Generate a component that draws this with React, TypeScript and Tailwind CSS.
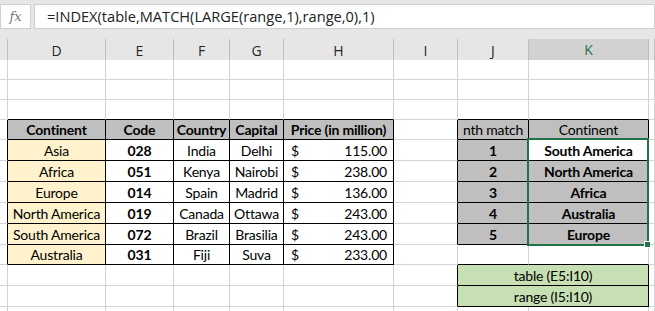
import React from "react";

const COLS = ["", "D", "E", "F", "G", "H", "I", "J", "K", ""];

type Cell = { text?: string; bold?: boolean; bg?: string; price?: string };

const left: Cell[][] = [
  [
    { text: "Continent", bold: true },
    { text: "Code", bold: true },
    { text: "Country", bold: true },
    { text: "Capital", bold: true },
    { text: "Price (in million)", bold: true },
  ],
  ...[
    ["Asia", "028", "India", "Delhi", "115.00"],
    ["Africa", "051", "Kenya", "Nairobi", "238.00"],
    ["Europe", "014", "Spain", "Madrid", "136.00"],
    ["North America", "019", "Canada", "Ottawa", "243.00"],
    ["South America", "072", "Brazil", "Brasilia", "243.00"],
    ["Australia", "031", "Fiji", "Suva", "233.00"],
  ].map((r) => [
    { text: r[0], bg: "yellow" },
    { text: r[1], bold: true },
    { text: r[2] },
    { text: r[3] },
    { price: r[4] },
  ]),
];

const right = ["South America", "North America", "Africa", "Australia", "Europe"];

// which cells belong to a bordered table: [row, col]
function inTable(r: number, c: number) {
  if (r >= 3 && r <= 9 && c >= 1 && c <= 5) return true;
  if (r >= 3 && r <= 8 && (c === 7 || c === 8)) return true;
  if ((r === 10 || r === 11) && (c === 7 || c === 8)) return true;
  return false;
}

function GridCell({ r, c }: { r: number; c: number }) {
  const rightBlack = inTable(r, c) || inTable(r, c + 1);
  const bottomBlack = inTable(r, c) || inTable(r + 1, c);
  const br = rightBlack ? "border-r-black" : "border-r-[#d4d4d4]";
  const bb = bottomBlack ? "border-b-black" : "border-b-[#d4d4d4]";

  let bg = "bg-white";
  let content: React.ReactNode = null;
  let bold = false;

  if (r >= 3 && r <= 9 && c >= 1 && c <= 5) {
    const cell = left[r - 3][c - 1];
    bold = !!cell.bold;
    if (r === 3) bg = "bg-[#bfbfbf]";
    else if (cell.bg === "yellow") bg = "bg-[#fff2cc]";
    if (cell.price) {
      content = (
        <div className="flex w-full justify-between pl-[7px] pr-[6px]">
          <span>$</span>
          <span>{cell.price}</span>
        </div>
      );
    } else content = cell.text;
  } else if (r >= 3 && r <= 8 && c === 7) {
    bg = "bg-[#bfbfbf]";
    content = r === 3 ? "nth match" : String(r - 3);
    bold = r !== 3;
  } else if (r >= 3 && r <= 8 && c === 8) {
    bg = r === 4 ? "bg-white" : "bg-[#bfbfbf]";
    content = r === 3 ? "Continent" : right[r - 4];
    bold = r !== 3;
  }

  return (
    <div
      className={`flex items-center justify-center overflow-visible whitespace-nowrap border-r border-b ${br} ${bb} ${bg} ${
        bold ? "font-bold" : "font-normal"
      }`}
    >
      {content}
    </div>
  );
}

function GreenCell({ text }: { text: string }) {
  return (
    <div className="col-span-2 flex items-center justify-center border-r border-b border-r-black border-b-black bg-[#c6e0b4]">
      {text}
    </div>
  );
}

export default function App() {
  const rows = Array.from({ length: 13 }, (_, i) => i);
  return (
    <div className="relative h-[311px] w-[655px] overflow-hidden bg-[#e6e6e6] font-['Lato','Carlito',sans-serif] text-[14px] tracking-[-0.2px] text-black">
      {/* formula bar */}
      <div className="flex h-[30px] items-start gap-[3px] pt-[4px] tracking-normal">
        <div className="flex h-[25px] w-[31px] items-center justify-center border border-[#d0d0d0] bg-white font-['DejaVu_Serif',serif] text-[13px] italic text-[#777]">
          fx
        </div>
        <div className="flex h-[25px] flex-1 items-center border border-[#d0d0d0] bg-white pl-[12px] font-['Open_Sans',sans-serif] text-[14.6px] text-[#222]">
          =INDEX(table,MATCH(LARGE(range,1),range,0),1)
        </div>
      </div>

      {/* column headers */}
      <div className="mt-[9px] grid h-[21px] grid-cols-[8px_98px_68px_56px_54px_110px_64px_71px_120px_1fr] font-['Open_Sans',sans-serif] text-[14px] tracking-normal">
        {COLS.map((l, i) => (
          <div
            key={i}
            className={
              i === 8
                ? "flex items-center justify-center border-r border-r-[#bdbdbd] border-b-2 border-b-[#217346] bg-[#d2d2d2] text-[#217346]"
                : "flex items-center justify-center border-r border-r-[#bdbdbd] border-b border-b-[#ababab] text-[#262626]"
            }
          >
            {l}
          </div>
        ))}
      </div>

      {/* cells */}
      <div className="grid grid-cols-[8px_98px_68px_56px_54px_110px_64px_71px_120px_1fr] grid-rows-[20px_20px_20px_20px_21px_21px_21px_21px_21px_20px_21px_21px_20px] bg-white">
        {rows.map((r) =>
          COLS.map((_, c) => {
            if ((r === 10 || r === 11) && c === 7)
              return <GreenCell key={`${r}-${c}`} text={r === 10 ? "table (E5:I10)" : "range (I5:I10)"} />;
            if ((r === 10 || r === 11) && c === 8) return null;
            return <GridCell key={`${r}-${c}`} r={r} c={c} />;
          })
        )}
      </div>

      {/* active selection */}
      <div className="pointer-events-none absolute left-[527px] top-[138px] h-[108px] w-[122px] border-2 border-[#217346]" />
      <div className="pointer-events-none absolute left-[644px] top-[241px] h-[7px] w-[7px] border border-white bg-[#217346]" />
    </div>
  );
}
